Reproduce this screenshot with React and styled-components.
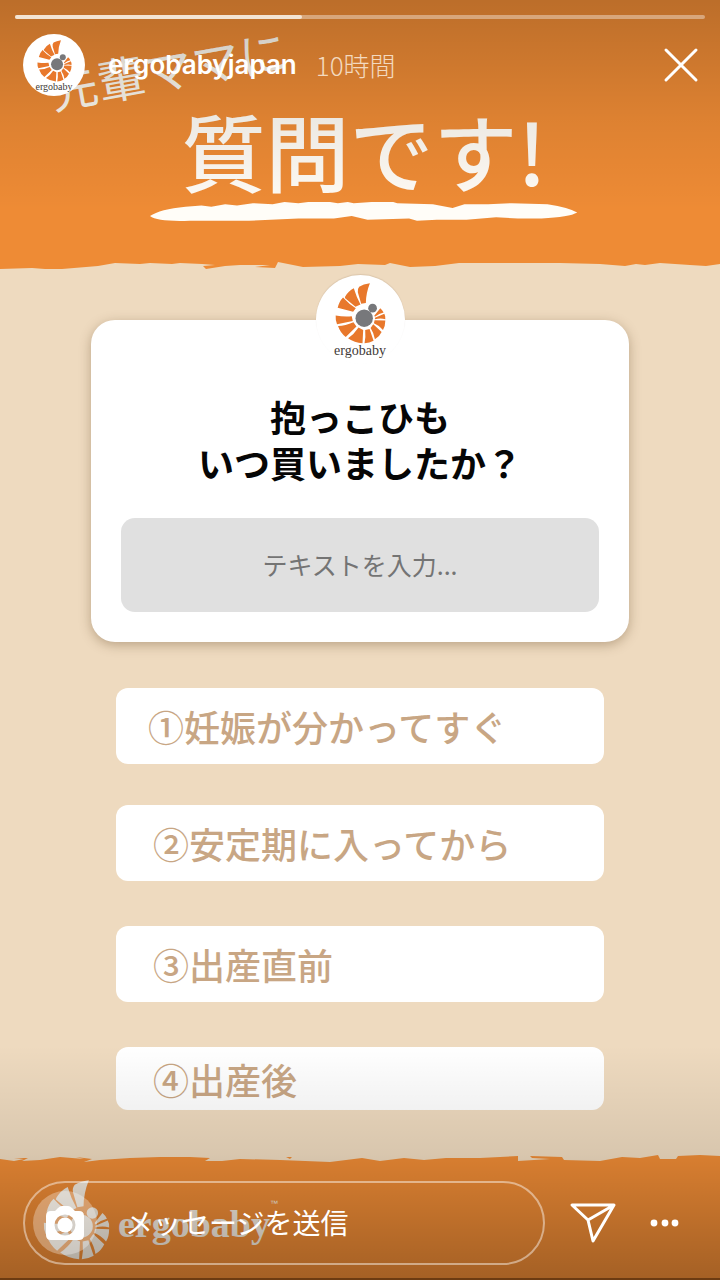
import React from "react";
import styled, { createGlobalStyle } from "styled-components";

const GlobalStyle = createGlobalStyle`
  * { box-sizing: border-box; }
  body {
    margin: 0;
    background: #eedabf;
    font-family: "Noto Sans CJK JP", "Noto Sans", sans-serif;
  }
  button, input { font-family: inherit; }
`;

const Story = styled.main`
  position: relative;
  display: flex;
  flex-direction: column;
  min-height: 100vh;
  overflow: hidden;
  background: #eedabf;
`;

/* Poster artwork */
const Banner = styled.header`
  display: flex;
  flex-direction: column;
  align-items: center;
  padding: 98px 0 36px 8px;
  background: #ee8b35;
`;

const Kicker = styled.p`
  position: absolute;
  top: 40px;
  left: 48px;
  margin: 0;
  font-size: 48px;
  line-height: 56px;
  color: #fffaf0;
  white-space: nowrap;
  transform: rotate(-10deg);
`;

const Title = styled.h1`
  margin: 0;
  font-size: 84px;
  font-weight: 500;
  line-height: 104px;
  color: #fffbf4;
`;

const Brush = styled.svg`
  display: block;
  width: 60%;
  height: 20px;
`;

const TornEdge = styled.svg`
  display: block;
  width: 100%;
  height: 14px;
  flex: none;
  background: #eedabf;
`;

const Content = styled.section`
  display: flex;
  flex-direction: column;
  flex: 1;
  padding: 48px 0 40px;
`;

const Card = styled.form`
  display: flex;
  flex-direction: column;
  align-items: center;
  margin: 0 91px;
  padding: 0 30px 30px;
  border-radius: 24px;
  background: #fff;
  box-shadow: 0 3px 12px rgba(90, 60, 30, 0.35);
`;

const Avatar = styled.span`
  display: flex;
  flex-direction: column;
  align-items: center;
  flex: none;
  width: ${(p) => p.$size}px;
  height: ${(p) => p.$size}px;
  margin-top: ${(p) => (p.$raised ? -45 : 0)}px;
  padding-top: ${(p) => (p.$raised ? 8 : 6)}px;
  border-radius: 50%;
  background: #fff;
  overflow: hidden;
  box-shadow: ${(p) => (p.$raised ? "0 -1px 1px rgba(90, 60, 30, 0.12)" : "none")};
`;

const AvatarName = styled.span`
  font-family: "Liberation Serif", serif;
  font-size: ${(p) => p.$size}px;
  font-weight: 400;
  line-height: ${(p) => p.$size}px;
  color: #3f3a38;
`;

const Question = styled.label`
  margin: 29px 0 33px;
  font-size: 36px;
  font-weight: 700;
  line-height: 46px;
  text-align: center;
  white-space: pre-line;
  color: #060606;
`;

const Answer = styled.input`
  width: 100%;
  height: 94px;
  border: 0;
  border-radius: 14px;
  padding: 0 16px 2px;
  background: #e0e0e0;
  font-size: 25px;
  font-weight: 400;
  text-align: center;
  color: #444;
  &::placeholder { color: #747474; opacity: 1; }
`;

const Options = styled.ol`
  display: flex;
  flex-direction: column;
  gap: 45px;
  margin: 46px 116px 0;
  padding: 0;
  list-style: none;
`;

const Option = styled.li`
  display: flex;
  align-items: center;
  height: ${(p) => (p.$short ? 63 : 76)}px;
  margin-bottom: ${(p) => (p.$tight ? -4 : 0)}px;
  padding-left: ${(p) => (p.$tight ? 32 : 37)}px;
  border-radius: 12px;
  background: #fff;
  font-size: 36px;
  font-weight: 500;
  line-height: 52px;
  color: #c8a684;
`;

const PosterFoot = styled.footer`
  display: flex;
  align-items: center;
  gap: 8px;
  height: 112px;
  padding: 0 43px 6px;
  border-bottom: 2px solid #9c5518;
  background: #ee8b35;
`;

const BrandName = styled.span`
  padding-top: 8px;
  font-family: "Liberation Serif", serif;
  font-size: 38px;
  font-weight: 700;
  line-height: 48px;
  color: #f6ede0;
`;

const Mark = styled.small`
  align-self: flex-start;
  margin: 32px 0 0 -8px;
  font-family: "Liberation Sans", sans-serif;
  font-size: 8px;
  line-height: 8px;
  color: #f6ede0;
`;

/* Viewer controls laid over the poster */
const Shade = styled.div`
  position: absolute;
  inset: 0;
  pointer-events: none;
  background:
    linear-gradient(rgba(0, 0, 0, 0.21), rgba(0, 0, 0, 0.07) 120px, transparent 210px),
    linear-gradient(to top, rgba(0, 0, 0, 0.31), rgba(0, 0, 0, 0.09) 126px, transparent 235px);
`;

const TopBar = styled.div`
  position: absolute;
  top: 0;
  left: 0;
  right: 0;
  padding: 15px 15px 0;
`;

const Track = styled.div`
  height: 4px;
  border-radius: 2px;
  background: rgba(255, 255, 255, 0.38);
`;

const Progress = styled.div`
  width: ${(p) => p.$value}%;
  height: 100%;
  border-radius: 2px;
  background: #f3e4d3;
`;

const Account = styled.div`
  display: flex;
  align-items: center;
  margin-top: 15px;
  padding: 0 6px 0 8px;
`;

const UserLink = styled.a`
  display: flex;
  align-items: center;
  gap: 23px;
  font-family: Inter, "Noto Sans", sans-serif;
  font-size: 26px;
  font-weight: 600;
  line-height: 32px;
  color: #fff;
  text-decoration: none;
`;

const Time = styled.time`
  margin-left: 19px;
  font-size: 26px;
  font-weight: 300;
  line-height: 32px;
  color: #f3d9bf;
`;

const IconButton = styled.button`
  display: flex;
  padding: 0;
  border: 0;
  background: none;
  color: #fff;
  cursor: pointer;
  margin-left: ${(p) => (p.$end ? "auto" : "0")};
`;

const BottomBar = styled.div`
  position: absolute;
  left: 0;
  right: 0;
  bottom: 15px;
  display: flex;
  align-items: center;
  padding: 0 31px 0 23px;
  gap: 24px;
`;

const Composer = styled.label`
  display: flex;
  align-items: center;
  flex: 1;
  gap: 28px;
  height: 84px;
  padding-left: 8px;
  border: 2px solid rgba(255, 255, 255, 0.45);
  border-radius: 42px;
`;

const CameraButton = styled(IconButton)`
  align-items: center;
  justify-content: center;
  width: 64px;
  height: 64px;
  border-radius: 50%;
  background: rgba(255, 255, 255, 0.3);
`;

const Message = styled.input`
  flex: 1;
  min-width: 0;
  padding: 0 0 2px;
  border: 0;
  background: none;
  font-size: 28px;
  font-weight: 400;
  line-height: 40px;
  color: #fff;
  &::placeholder { color: #fff; opacity: 1; }
`;

const segments = [
  "M204 70Q184 73 172 80Q166 87 168 97L178 131L192 129Q192 100 204 70Z",
  "M156 85Q140 93 130 110Q128 114 132 116L161 140L176 133Q164 112 156 85Z",
  "M124 112Q112 124 108 143L154 155L162 144Q142 132 124 112Z",
  "M102 166Q101 180 106 192L153 182L150 168Q126 170 102 166Z",
  "M109 197Q115 216 132 230L164 199L155 186Q131 197 109 197Z",
  "M139 234Q158 248 182 249L184 209L170 202Q157 222 139 234Z",
  "M188 249Q203 248 215 241L203 206L190 209Q192 230 188 249Z",
  "M219 237Q232 230 239 215L214 192L206 203Q216 218 219 237Z",
  "M243 209Q250 198 250 181L218 180L216 189Q233 196 243 209Z",
  "M250 177Q251 168 247 161L219 173L219 177Q236 173 250 177Z",
  "M245 157Q241 149 235 144L217 167L219 170Q232 160 245 157Z",
];

function ShellLogo({ width, height, color, dots }) {
  return (
    <svg width={width} height={height} viewBox="100 70 152 180" aria-hidden="true">
      {segments.map((d) => (
        <path key={d} d={d} fill={color} />
      ))}
      <circle cx="187" cy="174" r="26" fill={dots} />
      <circle cx="212" cy="144" r="13" fill={dots} />
    </svg>
  );
}

const options = [
  { text: "①妊娠が分かってすぐ", tight: true },
  { text: "②安定期に入ってから" },
  { text: "③出産直前" },
  { text: "④出産後", short: true },
];

export default function App() {
  return (
    <>
      <GlobalStyle />
      <Story>
        <Banner>
          <Kicker>先輩ママに</Kicker>
          <Title>質問です!</Title>
          <Brush viewBox="0 0 432 17" preserveAspectRatio="none" aria-hidden="true">
            <path
              d="M0 12Q10 6 36 4L52 3L62 4L76 2L88 3L104 1L124 2L136 0L150 1L160 0L182 0L190 1L200 0L206 1L224 0L246 0L250 1L286 2L306 5L318 2L342 2L366 1L402 2Q424 5 432 9Q424 13 396 14L372 14L350 13L320 15L290 15L270 16L262 14L220 15L204 12L186 14L150 14L100 16L66 16L40 16Q8 17 0 12Z"
              fill="#fffdf8"
            />
          </Brush>
        </Banner>
        <TornEdge viewBox="0 0 720 14" preserveAspectRatio="none" aria-hidden="true">
          <path
            d="M0 0H720V6L706 8L690 7L660 5L645 7L636 6L625 8L600 6L560 5L459 5L435 8L410 9L390 5L385 7L358 6L340 8L303 9L278 4L275 10L255 9L270 7L240 7L225 8L206 11L203 8L215 7L202 6L180 5L172 6L150 5L140 6L115 5L98 8L62 11L45 11L32 10L0 11Z"
            fill="#ee8b35"
          />
        </TornEdge>

        <Content>
          <Card onSubmit={(e) => e.preventDefault()}>
            <Avatar $size={89} $raised>
              <ShellLogo width={51} height={61} color="#e8782c" dots="#77787b" />
              <AvatarName $size={14}>ergobaby</AvatarName>
            </Avatar>
            <Question htmlFor="answer">{"抱っこひも\nいつ買いましたか？"}</Question>
            <Answer id="answer" type="text" placeholder="テキストを入力..." />
          </Card>
          <Options>
            {options.map((o) => (
              <Option key={o.text} $short={o.short} $tight={o.tight}>
                {o.text}
              </Option>
            ))}
          </Options>
        </Content>

        <TornEdge viewBox="0 0 720 14" preserveAspectRatio="none" aria-hidden="true">
          <path
            d="M0 5L14 7L24 5L14 4L28 4L22 7L40 6L60 3L84 5L76 3L92 5L84 8L100 6L130 4L160 3L190 3L210 4L205 7L222 7L240 5L280 6L330 8L362 4L380 7L404 4L424 6L446 4L480 4L518 2V7L550 5L532 4L530 2L562 3L564 6L600 7L622 3L640 4L658 1L660 5L676 5L678 2L700 1L720 2V14H0Z"
            fill="#ee8b35"
          />
          <path d="M286 3L292 3L290 5Z" fill="#ee8b35" />
        </TornEdge>
        <PosterFoot>
          <ShellLogo width={67} height={80} color="#f6ede0" dots="#f6ede0" />
          <BrandName>ergobaby</BrandName>
          <Mark>™</Mark>
        </PosterFoot>

        <Shade />

        <TopBar>
          <Track>
            <Progress $value={41.6} />
          </Track>
          <Account>
            <UserLink href="#profile">
              <Avatar $size={62}>
                <ShellLogo width={35} height={42} color="#e8782c" dots="#77787b" />
                <AvatarName $size={10}>ergobaby</AvatarName>
              </Avatar>
              ergobabyjapan
            </UserLink>
            <Time>10時間</Time>
            <IconButton type="button" aria-label="閉じる" $end>
              <svg width="36" height="36" viewBox="0 0 36 36" fill="none" stroke="currentColor" strokeWidth="3" strokeLinecap="round">
                <path d="M3 3L33 33M33 3L3 33" />
              </svg>
            </IconButton>
          </Account>
        </TopBar>

        <BottomBar>
          <Composer>
            <CameraButton type="button" aria-label="カメラ">
              <svg width="40" height="36" viewBox="0 0 40 36">
                <path
                  fill="currentColor"
                  fillRule="evenodd"
                  d="M13 3Q15 1 17 1H23Q25 1 27 3L30 6H34Q39 6 39 11V30Q39 35 34 35H6Q1 35 1 30V11Q1 6 6 6H10ZM20 9.500A10.500 10.500 0 1 0 20 30.500A10.500 10.500 0 1 0 20 9.500Z"
                />
                <circle cx="20" cy="20" r="7.600" fill="currentColor" />
              </svg>
            </CameraButton>
            <Message type="text" placeholder="メッセージを送信" aria-label="メッセージを送信" />
          </Composer>
          <IconButton type="button" aria-label="シェア">
            <svg width="48" height="42" viewBox="0 0 48 42" fill="none" stroke="currentColor" strokeWidth="3" strokeLinejoin="round">
              <path d="M3 3H45L24 39L19 18ZM19 18L45 3" />
            </svg>
          </IconButton>
          <IconButton type="button" aria-label="その他">
            <svg width="48" height="12" viewBox="0 0 48 12" fill="currentColor">
              <circle cx="13" cy="6" r="3.400" />
              <circle cx="24" cy="6" r="3.400" />
              <circle cx="34" cy="6" r="3.400" />
            </svg>
          </IconButton>
        </BottomBar>
      </Story>
    </>
  );
}
